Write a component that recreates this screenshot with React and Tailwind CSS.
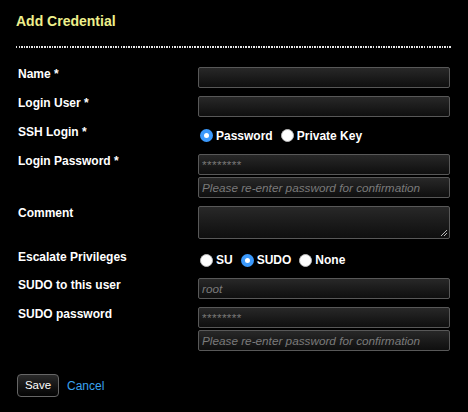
import React from "react";

function Radio({ checked, label, first }) {
  return (
    <div className={`flex items-center ${first ? "ml-[2px]" : "ml-[8px]"}`}>
      {checked ? (
        <span className="w-[13px] h-[13px] rounded-full bg-[#3b99fc] flex items-center justify-center shrink-0">
          <span className="w-[5px] h-[5px] rounded-full bg-white" />
        </span>
      ) : (
        <span className="w-[13px] h-[13px] rounded-full bg-white border border-[#bbb] shrink-0" />
      )}
      <span className="ml-[3px] text-[12px] leading-[14px] font-bold text-white">{label}</span>
    </div>
  );
}

function Field({ placeholder, stars, italic = true }) {
  return (
    <input
      type="text"
      placeholder={placeholder}
      className={`block h-[21px] w-[252px] border border-[#585858] rounded-[2px] bg-gradient-to-b from-[#282828] to-[#0f0f0f] pl-[3px] text-[11.75px] text-white outline-none placeholder:text-[#7a7a7a] ${
        stars ? "placeholder:not-italic placeholder:tracking-[0.4px]" : italic ? "placeholder:italic" : ""
      }`}
    />
  );
}

function Label({ children }) {
  return (
    <div className="w-[180px] shrink-0 text-[12px] leading-[14px] font-bold text-white">
      {children}
    </div>
  );
}

export default function App() {
  return (
    <div className="min-h-screen w-full bg-black pt-[13px] font-['Liberation_Sans',Arial,sans-serif]">
      <div className="ml-4 text-[14px] leading-[17px] font-bold text-[#eef08c]">Add Credential</div>
      <div className="mx-4 mt-[16px] h-[2px] w-[436px] bg-[repeating-linear-gradient(90deg,#e6e6e6_0px,#e6e6e6_1.5px,transparent_1.5px,transparent_2.55px)]" />

      <div className="mt-[19px] ml-[18px] flex flex-col">
        <div className="flex">
          <Label>Name *</Label>
          <Field />
        </div>
        <div className="flex mt-2">
          <Label>Login User *</Label>
          <Field />
        </div>
        <div className="flex mt-2">
          <Label>SSH Login *</Label>
          <div className="h-[21px] flex items-center">
            <Radio first checked label="Password" />
            <Radio label="Private Key" />
          </div>
        </div>
        <div className="flex mt-2">
          <Label>Login Password *</Label>
          <div className="flex flex-col gap-[2px]">
            <Field stars placeholder="********" />
            <Field placeholder="Please re-enter password for confirmation" />
          </div>
        </div>
        <div className="flex mt-2">
          <Label>Comment</Label>
          <div className="relative h-[33px] w-[252px] border border-[#585858] rounded-[2px] bg-gradient-to-b from-[#282828] to-[#0f0f0f]">
            <svg className="absolute right-[1px] bottom-[1px]" width="8" height="8" viewBox="0 0 8 8">
              <path d="M7 1 L1 7 M7 4 L4 7" stroke="#bbb" strokeWidth="1" />
            </svg>
          </div>
        </div>
        <div className="flex mt-[11px]">
          <Label>Escalate Privileges</Label>
          <div className="h-[20px] flex items-center">
            <Radio first label="SU" />
            <Radio checked label="SUDO" />
            <Radio label="None" />
          </div>
        </div>
        <div className="flex mt-2">
          <Label>SUDO to this user</Label>
          <Field placeholder="root" />
        </div>
        <div className="flex mt-2">
          <Label>SUDO password</Label>
          <div className="flex flex-col gap-[2px]">
            <Field stars placeholder="********" />
            <Field placeholder="Please re-enter password for confirmation" />
          </div>
        </div>
      </div>

      <div className="mt-[23px] ml-[17px] flex items-center">
        <button className="h-[23px] w-[42px] rounded-[4px] border border-[#666] bg-gradient-to-b from-[#2a2a2a] to-[#050505] text-[11.5px] text-white">
          Save
        </button>
        <span className="ml-[8px] text-[12px] text-[#3aa3ef]">Cancel</span>
      </div>
    </div>
  );
}
